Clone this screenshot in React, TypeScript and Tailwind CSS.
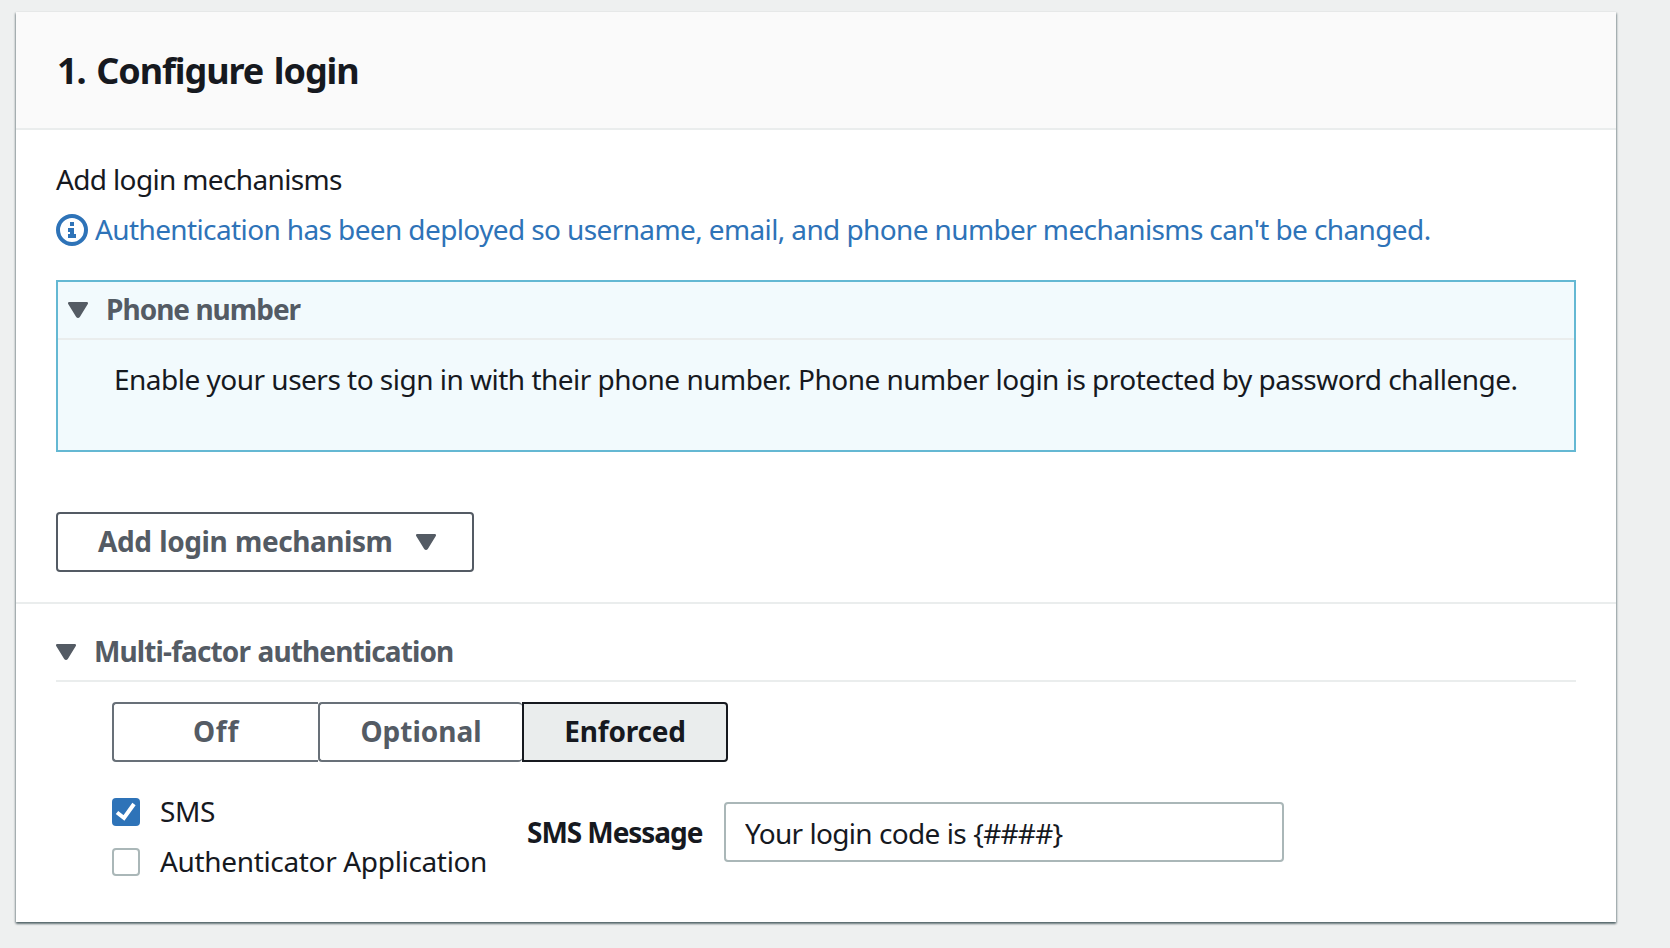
import React, { useState } from "react";

function Caret() {
  return (
    <svg width="20" height="16" viewBox="0 0 20 16" className="block shrink-0 text-[#545b64]">
      <path d="M1.200 0h17.600c1.100 0 1.600 1.100 1 2L11.800 15c-.9 1.300-2.700 1.300-3.600 0L.2 2C-.4 1.100.1 0 1.200 0z" fill="currentColor" />
    </svg>
  );
}

function InfoIcon() {
  return (
    <svg width="32" height="32" viewBox="0 0 32 32" className="block shrink-0 text-[#2e73b8]">
      <circle cx="16" cy="16" r="14" fill="none" stroke="currentColor" strokeWidth="4" />
      <path d="M14 8h4v4h-4zM12 14h6v6h2v4h-8v-4h2v-2h-2z" fill="currentColor" />
    </svg>
  );
}

function Checkbox({ checked, label, onToggle }: { checked: boolean; label: string; onToggle: () => void }) {
  return (
    <button type="button" role="checkbox" aria-checked={checked} onClick={onToggle} className="flex h-[50px] items-center text-left">
      <span className={checked ? "block size-7 shrink-0 rounded-[4px] bg-[#2e73b8]" : "block size-7 shrink-0 rounded-[4px] border-2 border-[#aab7b8] bg-white"}>
        {checked && (
          <svg width="28" height="28" viewBox="0 0 28 28" className="block">
            <path d="M5 14.500l7 5.500L22 6" fill="none" stroke="#fff" strokeWidth="4" />
          </svg>
        )}
      </span>
      <span className="mb-[2px] ml-5 whitespace-nowrap leading-[40px] tracking-[-0.34px]">{label}</span>
    </button>
  );
}

export default function App() {
  const [sms, setSms] = useState(true);
  const [totp, setTotp] = useState(false);
  return (
    <div className="h-[948px] w-[1670px] overflow-hidden bg-[#eef0f0] pl-4 pt-3 font-['Noto_Sans',sans-serif] text-[28px] font-[450] text-[#16191f]">
      <main className="flex h-[910px] w-[1600px] flex-col bg-white shadow-[0_2px_2px_0_rgba(0,28,36,0.45),1px_1px_2px_0_rgba(0,28,36,0.25),-1px_1px_2px_0_rgba(0,28,36,0.25)]">
        <header className="h-[118px] border-b-2 border-[#eaeded] bg-[#fafafa] pl-[41px] pt-[35px]">
          <h1 className="whitespace-nowrap text-[36px] font-bold leading-[48px] tracking-[-1.1px] [word-spacing:2.5px]">1. Configure login</h1>
        </header>

        <section className="flex h-[474px] flex-col border-b-2 border-[#eaeded] px-10 pt-[29px]">
          <p className="whitespace-nowrap leading-[40px] tracking-[-0.65px]">Add login mechanisms</p>
          <div className="mt-[10px] flex h-10 items-start gap-[7px] text-[#2e73b8]">
            <span className="mt-[5px]"><InfoIcon /></span>
            <p className="whitespace-nowrap leading-[40px] tracking-[-0.615px]">
              Authentication has been deployed so username, email, and phone number mechanisms can't be changed.
            </p>
          </div>

          <div className="mt-[31px] h-[172px] border-2 border-[#64b8d3] bg-[#f2fafd]">
            <div className="flex h-[58px] items-center border-b-2 border-[#eaeded] pl-[10px]">
              <Caret />
              <h2 className="mb-[2px] ml-[18px] whitespace-nowrap font-bold leading-[40px] tracking-[-0.98px] text-[#545b64]">Phone number</h2>
            </div>
            <p className="whitespace-nowrap pl-[56px] pt-[19px] leading-[40px] tracking-[-0.51px]">
              Enable your users to sign in with their phone number. Phone number login is protected by password challenge.
            </p>
          </div>

          <button type="button" className="mt-[60px] flex h-[60px] w-[418px] items-center rounded-[4px] border-2 border-[#545b64] pl-10 font-bold text-[#545b64]">
            <span className="mb-[2px] w-[318px] whitespace-nowrap text-left leading-[40px] tracking-[-0.44px] [word-spacing:1px]">Add login mechanism</span>
            <Caret />
          </button>
        </section>

        <section className="px-10 pt-[27px]">
          <div className="flex h-[51px] items-start border-b-2 border-[#eaeded]">
            <span className="mt-[13px]"><Caret /></span>
            <h2 className="ml-[18px] whitespace-nowrap font-bold leading-[40px] tracking-[-0.88px] [word-spacing:1px] text-[#545b64]">Multi-factor authentication</h2>
          </div>
          <div className="ml-14 mt-5 flex h-[60px] w-[616px] font-bold leading-[40px] text-[#545b64]">
            <button type="button" className="w-[206px] rounded-l-[4px] border-2 border-r-0 border-[#687078] pb-[2px] tracking-[0.8px]">Off</button>
            <button type="button" className="w-[204px] rounded-[4px] border-2 border-r-0 border-[#687078] pb-[2px]">Optional</button>
            <button type="button" className="w-[206px] rounded-r-[4px] border-2 border-[#16191f] bg-[#eaeded] pb-[2px] tracking-[-0.2px] text-[#16191f]">Enforced</button>
          </div>
          <div className="ml-14 mt-[25px] flex items-start">
            <div className="flex w-[415px] flex-col">
              <Checkbox checked={sms} label="SMS" onToggle={() => setSms(!sms)} />
              <Checkbox checked={totp} label="Authenticator Application" onToggle={() => setTotp(!totp)} />
            </div>
            <label className="mt-[25px] w-[197px] whitespace-nowrap font-bold leading-[40px] tracking-[-1.05px]">SMS Message</label>
            <input
              type="text"
              defaultValue="Your login code is {####}"
              className="mt-[15px] h-[60px] w-[560px] rounded-[4px] border-2 border-[#aab7b8] bg-white px-[19px] pt-[1px] tracking-[-0.75px] outline-none [word-spacing:0.8px]"
            />
          </div>
        </section>
      </main>
    </div>
  );
}
